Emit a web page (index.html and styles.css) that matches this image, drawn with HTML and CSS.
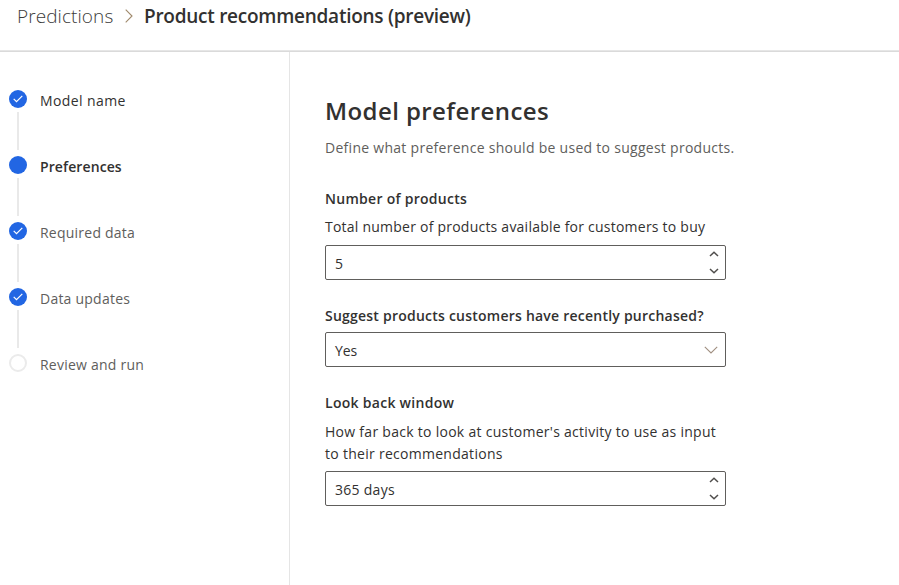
FILE: index.html
```html
<!DOCTYPE html>
<html lang="en">
<head>
<meta charset="utf-8">
<title>Product recommendations (preview)</title>
<link rel="stylesheet" href="styles.css">
</head>
<body>
<header class="header">
  <span class="crumb">Predictions</span>
  <svg class="crumb-arrow" width="8" height="14" viewBox="0 0 8 14"><path d="M.7.7 7 7 .7 13.300"/></svg>
  <h1 class="crumb-current">Product recommendations (preview)</h1>
</header>
<div class="body">
  <nav class="steps">
    <div class="step visited"><div class="rail"><span class="dot done"><svg width="10" height="8" viewBox="0 0 10 8"><path d="M.7 3.900 3.500 6.700 9.300.9"/></svg></span><span class="line"></span></div><span class="step-label l-name">Model name</span></div>
    <div class="step current"><div class="rail"><span class="dot done"></span><span class="line"></span></div><span class="step-label l-pref">Preferences</span></div>
    <div class="step"><div class="rail"><span class="dot done"><svg width="10" height="8" viewBox="0 0 10 8"><path d="M.7 3.900 3.500 6.700 9.300.9"/></svg></span><span class="line"></span></div><span class="step-label">Required data</span></div>
    <div class="step"><div class="rail"><span class="dot done"><svg width="10" height="8" viewBox="0 0 10 8"><path d="M.7 3.900 3.500 6.700 9.300.9"/></svg></span><span class="line"></span></div><span class="step-label">Data updates</span></div>
    <div class="step"><div class="rail"><span class="dot"></span></div><span class="step-label">Review and run</span></div>
  </nav>
  <main class="content">
    <h2 class="title">Model preferences</h2>
    <p class="intro">Define what preference should be used to suggest products.</p>
    <section class="field field-count">
      <h3 class="label label-count">Number of products</h3>
      <p class="help help-count">Total number of products available for customers to buy</p>
      <div class="input"><span class="value">5</span><span class="spin"><svg width="10" height="6" viewBox="0 0 10 6"><path d="M1 5 5 1.200 9 5"/></svg><svg width="10" height="6" viewBox="0 0 10 6"><path d="M1 1 5 4.800 9 1"/></svg></span></div>
    </section>
    <section class="field field-recent">
      <h3 class="label label-recent">Suggest products customers have recently purchased?</h3>
      <div class="input"><span class="value value-yes">Yes</span><svg class="caret" width="14" height="8" viewBox="0 0 14 8"><path d="M.8.8 7 7 13.200.8"/></svg></div>
    </section>
    <section class="field field-window">
      <h3 class="label label-window">Look back window</h3>
      <p class="help help-window">How far back to look at customer's activity to use as input<br>to their recommendations</p>
      <div class="input"><span class="value value-days">365 days</span><span class="spin"><svg width="10" height="6" viewBox="0 0 10 6"><path d="M1 5 5 1.200 9 5"/></svg><svg width="10" height="6" viewBox="0 0 10 6"><path d="M1 1 5 4.800 9 1"/></svg></span></div>
    </section>
  </main>
</div>
</body>
</html>
```
FILE: styles.css
```css
* { box-sizing: border-box; }
body {
  margin: 0;
  height: 585px;
  overflow: hidden;
  display: flex;
  flex-direction: column;
  background: #fff;
  color: #323130;
  font-family: "Open Sans", "Noto Sans", sans-serif;
  font-size: 14px;
}
h1, h2, h3, p { margin: 0; white-space: nowrap; }
svg { display: block; fill: none; }

.header {
  height: 51px;
  flex: none;
  display: flex;
  align-items: flex-start;
  padding: 3px 0 0 17px;
  line-height: 26px;
  border-bottom: 1px solid #e6e6e6;
}
.crumb { width: 108px; font-size: 19px; font-weight: 300; color: #3b3a39; letter-spacing: .08px; }
.crumb-arrow { margin-top: 6px; stroke: #a08a6c; stroke-width: 1.100; }
.crumb-current { margin-left: 11px; font-size: 19px; font-weight: 600; letter-spacing: -.26px; }

.body { flex: 1; display: flex; border-top: 1px solid #dadada; }
.steps { width: 290px; padding: 38px 0 0 9px; border-right: 1px solid #e5e5e5; }
.step { display: flex; height: 66px; gap: 13px; color: #605e5c; letter-spacing: .23px; }
.visited, .current { color: #323130; }
.visited { letter-spacing: .4px; }
.current { font-weight: 600; letter-spacing: .1px; }
.rail { width: 18px; display: flex; flex-direction: column; align-items: center; gap: 4px; }
.dot {
  width: 18px; height: 18px; border-radius: 50%;
  border: 2px solid #ebebeb;
  display: flex; align-items: center; justify-content: center;
}
.done { border: 0; background: #2266e3; }
.dot path { stroke: #fff; stroke-width: 1.200; }
.line { width: 2px; height: 38px; background: #e9e9e9; }
.step-label { line-height: 20px; margin-top: 1px; }

.content { padding: 42px 0 0 35px; }
.title { font-size: 24px; line-height: 34px; font-weight: 600; letter-spacing: .42px; }
.intro { margin-top: 10px; line-height: 20px; color: #605e5c; letter-spacing: .28px; }
.field { width: 401px; letter-spacing: .28px; }
.field-count { margin-top: 31px; }
.field-recent { margin-top: 26px; }
.field-window { margin-top: 26px; }
.label { font-size: 14px; line-height: 20px; font-weight: 600; }
.help { line-height: 22px; }
.help-count { margin: 7px 0; letter-spacing: .23px; }
.help-window { margin: 8px 0 6px; }
.label-recent { margin-bottom: 6px; letter-spacing: .23px; }
.input {
  height: 35px;
  display: flex;
  align-items: center;
  justify-content: space-between;
  padding: 0 7px 0 9px;
  border: 1px solid #605e5c;
  border-radius: 2px;
}
.value { padding-top: 2px; }
.value-yes { letter-spacing: -.1px; }
.spin { display: flex; flex-direction: column; gap: 11px; margin-right: -1px; }
.spin path { stroke: #504e4c; stroke-width: 1.500; }
.caret { stroke: #a08f80; stroke-width: 1.100; }
```
